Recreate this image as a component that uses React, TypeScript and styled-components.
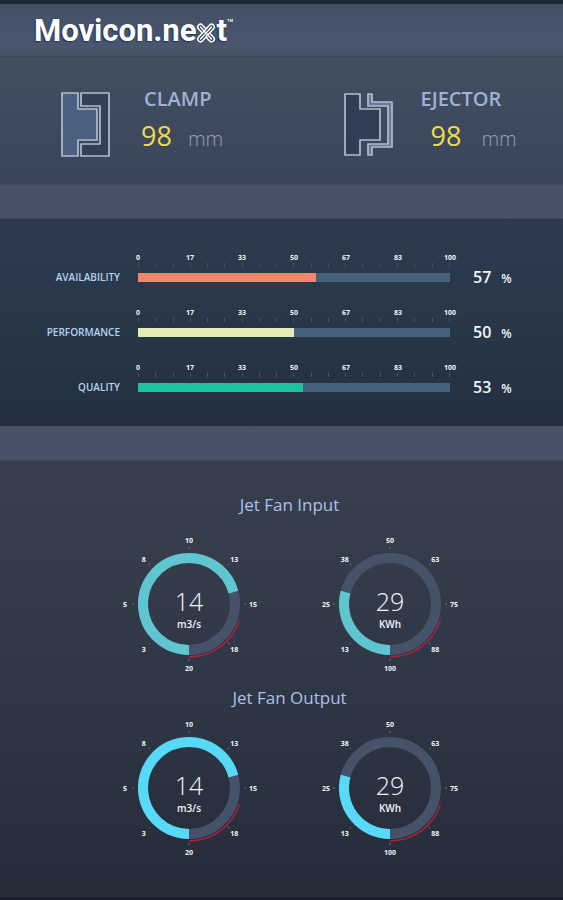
import React from 'react';
import styled, { createGlobalStyle } from 'styled-components';

const GlobalStyle = createGlobalStyle`
  *, *::before, *::after { box-sizing: border-box; }
  body { margin: 0; background: #272c39; }
`;

const Page = styled.div`
  min-height: 100vh;
  display: flex;
  flex-direction: column;
  border-top: 4px solid #1c2838;
  border-bottom: 3px solid #1b2130;
  font-family: 'Open Sans', 'Noto Sans', sans-serif;
  color: #f2f5fa;
`;

const Header = styled.header`
  height: 53px;
  padding: 2px 34px 0;
  display: flex;
  align-items: center;
  background: linear-gradient(#445066, #49566e 85%, #445167);
  border-bottom: 1px solid #3a475b;
`;

const Logo = styled.h1`
  margin: 0;
  display: flex;
  align-items: baseline;
  font: 700 31px/40px Roboto, sans-serif;
  color: #ffffff;
  text-shadow: -1px 1px 1px #1d3357;
`;

const LogoCross = styled.svg`
  width: 20px;
  height: 20px;
  margin-top: 4px;
  align-self: center;
`;

const Trademark = styled.span`
  align-self: flex-start;
  font-size: 4px;
  line-height: 20px;
`;

const Machines = styled.section`
  height: 127px;
  padding-top: 27px;
  display: grid;
  grid-template-columns: 1fr 1fr;
  background: linear-gradient(#424f61, #394559);
`;

const Machine = styled.article<{ $gap: number }>`
  padding: 8px 0 0 61px;
  display: flex;
  align-items: flex-start;
  gap: ${(p) => p.$gap}px;
`;

const MachineIcon = styled.svg`
  width: 50px;
  height: 66px;
  flex: none;
  stroke: #b1bdcc;
  stroke-width: 1.7;
  stroke-linejoin: round;
`;

const MachineTitle = styled.h2<{ $indent: number }>`
  margin: 0;
  padding-left: ${(p) => p.$indent}px;
  font-size: 20px;
  font-weight: 600;
  line-height: 14px;
  color: #a0b0d6;
`;

const Readout = styled.p<{ $indent: number; $gap: number }>`
  margin: 14px 0 0;
  padding-left: ${(p) => p.$indent}px;
  display: flex;
  align-items: baseline;
  gap: ${(p) => p.$gap}px;
  line-height: 32px;
`;

const ReadoutValue = styled.span`
  font-size: 27px;
  color: #ecdc4e;
`;

const ReadoutUnit = styled.span`
  font-size: 20px;
  font-weight: 300;
  color: #93a0bb;
`;

const Band = styled.div`
  height: 35px;
  background: #475269;
  border-top: 1px solid #404c61;
  border-bottom: 1px solid #3a4558;
`;

const Metrics = styled.section`
  height: 207px;
  padding: 34px 49px 0 0;
  background: linear-gradient(#2c3b4e, #283849 45%, #222f40);
`;

const MetricRow = styled.div`
  height: 55px;
  display: grid;
  grid-template-columns: 120px 1fr 46px;
  column-gap: 18px;
`;

const MetricLabel = styled.h3`
  margin: 16px 0 0;
  text-align: right;
  font-size: 10px;
  font-weight: 600;
  line-height: 16px;
  color: #b4d3f2;
`;

const ScaleLabels = styled.div`
  display: flex;
  justify-content: space-between;
  height: 10px;
  font-size: 7px;
  font-weight: 700;
  line-height: 10px;
`;

const ScaleLabel = styled.span`
  width: 0;
  display: flex;
  justify-content: center;
`;

const Ticks = styled.div`
  height: 4px;
  margin-bottom: 6px;
  display: flex;
  justify-content: space-between;
`;

const Tick = styled.i`
  width: 1px;
  background: #43546a;
`;

const Track = styled.div`
  height: 9px;
  background: #45617c;
`;

const Fill = styled.div<{ $color: string }>`
  height: 100%;
  background: ${(p) => p.$color};
`;

const MetricValue = styled.p`
  margin: 16px 0 0;
  padding-left: 5px;
  display: flex;
  align-items: baseline;
  gap: 10px;
  font-size: 16px;
  font-weight: 600;
  line-height: 16px;
`;

const Percent = styled.span`
  font-size: 12px;
`;

const Fans = styled.section`
  flex: 1;
  padding: 32px 0 36px 16px;
  display: flex;
  flex-direction: column;
  gap: 11px;
  background: linear-gradient(#383f4c, #303847 45%, #262b38);
`;

const FanGroup = styled.div<{ $gap: number }>`
  display: flex;
  flex-direction: column;
  align-items: center;
  gap: ${(p) => p.$gap}px;
`;

const FanTitle = styled.h2`
  margin: 0;
  font-size: 17px;
  font-weight: 400;
  line-height: 24px;
  color: #abc0ea;
`;

const GaugePair = styled.div`
  display: flex;
  gap: 51px;
`;

const GaugeSvg = styled.svg`
  width: 150px;
  height: 142px;
  display: block;
  fill: #f2f5fa;
  text-anchor: middle;
`;

const GaugeMark = styled.text`
  font-size: 7px;
  font-weight: 700;
`;

const GaugeValue = styled.text`
  font-size: 25px;
  font-weight: 300;
`;

const GaugeUnit = styled.text`
  font-size: 10px;
  font-weight: 600;
`;

const SCALE = [0, 17, 33, 50, 67, 83, 100];
const METRICS = [
  { name: 'AVAILABILITY', value: 57, color: '#f4866c' },
  { name: 'PERFORMANCE', value: 50, color: '#e2ecb3' },
  { name: 'QUALITY', value: 53, color: '#1dc3a0' },
];

function Metric({ name, value, color }: { name: string; value: number; color: string }) {
  return (
    <MetricRow>
      <MetricLabel>{name}</MetricLabel>
      <div>
        <ScaleLabels>
          {SCALE.map((n) => (
            <ScaleLabel key={n}>{n}</ScaleLabel>
          ))}
        </ScaleLabels>
        <Ticks>
          {Array.from({ length: 19 }, (_, i) => (
            <Tick key={i} />
          ))}
        </Ticks>
        <Track role="meter" aria-label={name} aria-valuenow={value} aria-valuemin={0} aria-valuemax={100}>
          <Fill $color={color} style={{ width: `${value}%` }} />
        </Track>
      </div>
      <MetricValue>
        {value}
        <Percent>%</Percent>
      </MetricValue>
    </MetricRow>
  );
}

/* Angles run clockwise, in degrees, from the bottom of the dial. */
function point(angle: number, radius: number) {
  const a = (angle * Math.PI) / 180;
  return [-Math.sin(a) * radius, Math.cos(a) * radius];
}

function arc(from: number, to: number, radius: number) {
  const [x1, y1] = point(from, radius);
  const [x2, y2] = point(to, radius);
  return `M${x1} ${y1}A${radius} ${radius} 0 ${to - from > 180 ? 1 : 0} 1 ${x2} ${y2}`;
}

type GaugeProps = { value: number; unit: string; sweep: number; marks: number[]; color: string };

function Gauge({ value, unit, sweep, marks, color }: GaugeProps) {
  return (
    <GaugeSvg viewBox="-75 -71 150 142" role="img" aria-label={`${value} ${unit}`}>
      <circle r="46" fill="none" stroke="#465269" strokeWidth="10" />
      <path d={arc(0, sweep, 46)} fill="none" stroke={color} strokeWidth="10" />
      <path d={arc(288, 360, 53)} fill="none" stroke="#b3203a" strokeWidth="1.5" />
      {marks.map((mark, i) => {
        const angle = (i + 1) * 45;
        const [x1, y1] = point(angle, 55);
        const [x2, y2] = point(angle, 57);
        const [tx, ty] = point(angle, 64);
        return (
          <React.Fragment key={mark}>
            <path d={`M${x1} ${y1}L${x2} ${y2}`} stroke="#68758b" />
            <GaugeMark x={tx} y={ty + 3}>{mark}</GaugeMark>
          </React.Fragment>
        );
      })}
      <GaugeValue y="7">{value}</GaugeValue>
      <GaugeUnit y="24">{unit}</GaugeUnit>
    </GaugeSvg>
  );
}

const FLOW_MARKS = [3, 5, 8, 10, 13, 15, 18, 20];
const POWER_MARKS = [13, 25, 38, 50, 63, 75, 88, 100];

function Fan({ title, color, gap }: { title: string; color: string; gap: number }) {
  return (
    <FanGroup $gap={gap}>
      <FanTitle>{title}</FanTitle>
      <GaugePair>
        <Gauge value={14} unit="m3/s" sweep={255} marks={FLOW_MARKS} color={color} />
        <Gauge value={29} unit="KWh" sweep={105} marks={POWER_MARKS} color={color} />
      </GaugePair>
    </FanGroup>
  );
}

export default function App() {
  return (
    <Page>
      <GlobalStyle />
      <Header>
        <Logo>
          Movicon.ne
          <LogoCross viewBox="0 0 19 20" role="img" aria-label="x" fill="none" strokeLinecap="round">
            <path d="M4 4L15 16" stroke="#fff" strokeWidth="7" />
            <path d="M4 4L15 16" stroke="#2b3d59" strokeWidth="4" />
            <path d="M15 4L4 16" stroke="#fff" strokeWidth="7" />
            <path d="M15 4L4 16" stroke="#2b3d59" strokeWidth="4" />
            <path d="M4 4L15 16M15 4L4 16" stroke="#fff" strokeWidth="1.6" />
          </LogoCross>
          t<Trademark>TM</Trademark>
        </Logo>
      </Header>
      <Machines>
        <Machine $gap={30}>
          <MachineIcon viewBox="0 0 50 66" aria-hidden="true">
            <path d="M1 1H17V17H36V48H17V64H1Z" fill="#4c6182" />
            <path d="M20 1H48V64H20V52H39V14H20Z" fill="#334157" />
          </MachineIcon>
          <div>
            <MachineTitle $indent={3}>CLAMP</MachineTitle>
            <Readout $indent={0} $gap={16}>
              <ReadoutValue>98</ReadoutValue>
              <ReadoutUnit>mm</ReadoutUnit>
            </Readout>
          </div>
        </Machine>
        <Machine $gap={28}>
          <MachineIcon viewBox="0 0 50 66" aria-hidden="true">
            <path d="M2 2H17V17H37V48H17V63H2Z" fill="#2f3e54" />
            <path d="M25 2H29V10H49V55H29V63H25V52H45V14H25Z" fill="#65799b" />
          </MachineIcon>
          <div>
            <MachineTitle $indent={0}>EJECTOR</MachineTitle>
            <Readout $indent={10} $gap={20}>
              <ReadoutValue>98</ReadoutValue>
              <ReadoutUnit>mm</ReadoutUnit>
            </Readout>
          </div>
        </Machine>
      </Machines>
      <Band />
      <Metrics>
        {METRICS.map((m) => (
          <Metric key={m.name} {...m} />
        ))}
      </Metrics>
      <Band />
      <Fans>
        <Fan title="Jet Fan Input" color="#5fc6d1" gap={16} />
        <Fan title="Jet Fan Output" color="#57d9f8" gap={7} />
      </Fans>
    </Page>
  );
}
